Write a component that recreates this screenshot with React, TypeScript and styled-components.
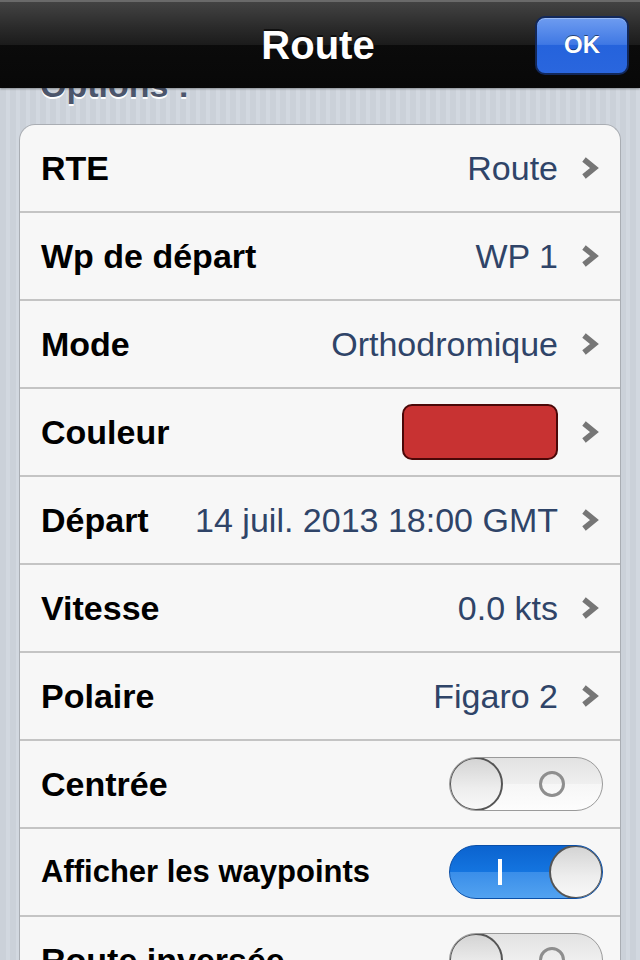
import React from "react";
import styled, { createGlobalStyle } from "styled-components";

const GlobalStyle = createGlobalStyle`
  html, body {
    margin: 0;
    padding: 0;
    background: #cfd5dd;
  }
  * {
    box-sizing: border-box;
  }
`;

type Row =
  | { label: string; kind: "value"; value: string; small?: boolean }
  | { label: string; kind: "color"; color: string; small?: boolean }
  | { label: string; kind: "toggle"; on: boolean; small?: boolean };

const rows: Row[] = [
  { label: "RTE", kind: "value", value: "Route" },
  { label: "Wp de départ", kind: "value", value: "WP 1" },
  { label: "Mode", kind: "value", value: "Orthodromique" },
  { label: "Couleur", kind: "color", color: "#c83232" },
  { label: "Départ", kind: "value", value: "14 juil. 2013 18:00 GMT" },
  { label: "Vitesse", kind: "value", value: "0.0 kts" },
  { label: "Polaire", kind: "value", value: "Figaro 2" },
  { label: "Centrée", kind: "toggle", on: false },
  { label: "Afficher les waypoints", kind: "toggle", on: true, small: true },
  { label: "Route inversée", kind: "toggle", on: false },
];

const Chevron = () => (
  <ChevronIcon width="18" height="24" viewBox="0 0 18 24">
    <polyline
      points="3,3.5 13.5,12 3,20.5"
      fill="none"
      stroke="#767676"
      strokeWidth="5.5"
      strokeLinejoin="miter"
    />
  </ChevronIcon>
);

const Toggle = ({ on }: { on: boolean }) =>
  on ? (
    <TrackOn>
      <Mark>
        <OnBar />
      </Mark>
      <Knob />
    </TrackOn>
  ) : (
    <TrackOff>
      <Knob />
      <Mark>
        <OffRing />
      </Mark>
    </TrackOff>
  );

const App = () => {
  return (
    <Screen>
      <GlobalStyle />
      <NavBar>
        <NavSide />
        <Title>Route</Title>
        <NavSide>
          <OkButton>OK</OkButton>
        </NavSide>
      </NavBar>
      <Scroller>
        <ScrollContent>
          <SectionHeader>Options :</SectionHeader>
          <Group>
            {rows.map((row) => (
              <Cell key={row.label}>
                <Label $small={row.small}>{row.label}</Label>
                {row.kind === "value" && (
                  <Accessory>
                    <Value>{row.value}</Value>
                    <Chevron />
                  </Accessory>
                )}
                {row.kind === "color" && (
                  <Accessory>
                    <Swatch $color={row.color} />
                    <Chevron />
                  </Accessory>
                )}
                {row.kind === "toggle" && <Toggle on={row.on} />}
              </Cell>
            ))}
          </Group>
        </ScrollContent>
      </Scroller>
    </Screen>
  );
};

const Screen = styled.div`
  width: 640px;
  height: 960px;
  display: flex;
  flex-direction: column;
  overflow: hidden;
  font-family: "Liberation Sans", Arial, Helvetica, sans-serif;
  background-color: #cfd5dd;
  background-image: repeating-linear-gradient(
    90deg,
    #cbd1d9 0px,
    #cbd1d9 6px,
    #d2d8e0 6px,
    #d2d8e0 10px
  );
`;

const NavBar = styled.div`
  height: 88px;
  flex-shrink: 0;
  display: flex;
  align-items: center;
  justify-content: space-between;
  padding: 0 11px;
  border-top: 2px solid #6a6a6a;
  background: linear-gradient(
    180deg,
    #434343 0%,
    #2a2a2a 30%,
    #1b1b1b 50%,
    #0b0b0b 50%,
    #080808 100%
  );
  position: relative;
  z-index: 1;
  box-shadow: 0 1px 2px rgba(0, 0, 0, 0.35);
`;

const NavSide = styled.div`
  width: 94px;
  display: flex;
  justify-content: flex-end;
`;

const Title = styled.div`
  color: #ffffff;
  font-size: 40px;
  font-weight: bold;
  margin-right: 4px;
  text-shadow: 0 -2px 0 rgba(0, 0, 0, 0.6);
`;

const OkButton = styled.div`
  width: 94px;
  height: 59px;
  display: flex;
  align-items: center;
  justify-content: center;
  color: #ffffff;
  font-size: 24px;
  font-weight: bold;
  border-radius: 10px;
  border: 2px solid #12285a;
  text-shadow: 0 -1px 0 rgba(0, 0, 0, 0.5);
  background: linear-gradient(
    180deg,
    #6e9cf0 0%,
    #3f78e4 48%,
    #2563dc 50%,
    #2a66de 100%
  );
  box-shadow: inset 0 1px 0 rgba(255, 255, 255, 0.3);
`;

const Scroller = styled.div`
  flex: 1;
  overflow: hidden;
`;

const ScrollContent = styled.div`
  margin-top: -23px;
  padding: 0 19px;
`;

const SectionHeader = styled.div`
  height: 40px;
  line-height: 40px;
  padding-left: 21px;
  margin-bottom: 19px;
  font-size: 34px;
  font-weight: bold;
  color: #4c566c;
  text-shadow: 0 2px 0 #ffffff;
`;

const Group = styled.div`
  border: 1px solid #a9adb3;
  border-bottom: none;
  border-radius: 16px 16px 0 0;
  background: #f7f7f7;
  overflow: hidden;
`;

const Cell = styled.div`
  height: 88px;
  display: flex;
  align-items: center;
  justify-content: space-between;
  padding: 0 17px 0 21px;
  border-bottom: 2px solid #c4c4c4;
`;

const Label = styled.div<{ $small?: boolean }>`
  font-size: ${(p) => (p.$small ? "31px" : "34px")};
  font-weight: bold;
  color: #000000;
`;

const Accessory = styled.div`
  display: flex;
  align-items: center;
  gap: 23px;
`;

const Value = styled.div`
  font-size: 34px;
  color: #2f4468;
`;

const ChevronIcon = styled.svg`
  display: block;
  margin-right: 4px;
`;

const Swatch = styled.div<{ $color: string }>`
  width: 156px;
  height: 56px;
  border-radius: 10px;
  background: ${(p) => p.$color};
  border: 2px solid #4a0808;
`;

const TrackBase = styled.div`
  width: 154px;
  height: 54px;
  border-radius: 27px;
  display: flex;
  align-items: center;
  overflow: hidden;
`;

const TrackOff = styled(TrackBase)`
  border: 1px solid #9a9a9a;
  background: linear-gradient(
    180deg,
    #e2e2e2 0%,
    #efefef 50%,
    #f6f6f6 50%,
    #fdfdfd 100%
  );
`;

const TrackOn = styled(TrackBase)`
  border: 1px solid #0a4fa8;
  background: linear-gradient(
    180deg,
    #0b63cf 0%,
    #1475e0 50%,
    #3a8ee9 50%,
    #52a2f0 100%
  );
`;

const Knob = styled.div`
  width: 54px;
  height: 54px;
  margin: -1px;
  flex-shrink: 0;
  border-radius: 50%;
  border: 2px solid #555555;
  background: linear-gradient(180deg, #d4d4d4 0%, #eeeeee 60%, #f8f8f8 100%);
`;

const Mark = styled.div`
  flex: 1;
  display: flex;
  align-items: center;
  justify-content: center;
`;

const OffRing = styled.div`
  width: 26px;
  height: 26px;
  border-radius: 50%;
  border: 3px solid #8e8e8e;
`;

const OnBar = styled.div`
  width: 4px;
  height: 26px;
  background: #ffffff;
`;

export default App;
